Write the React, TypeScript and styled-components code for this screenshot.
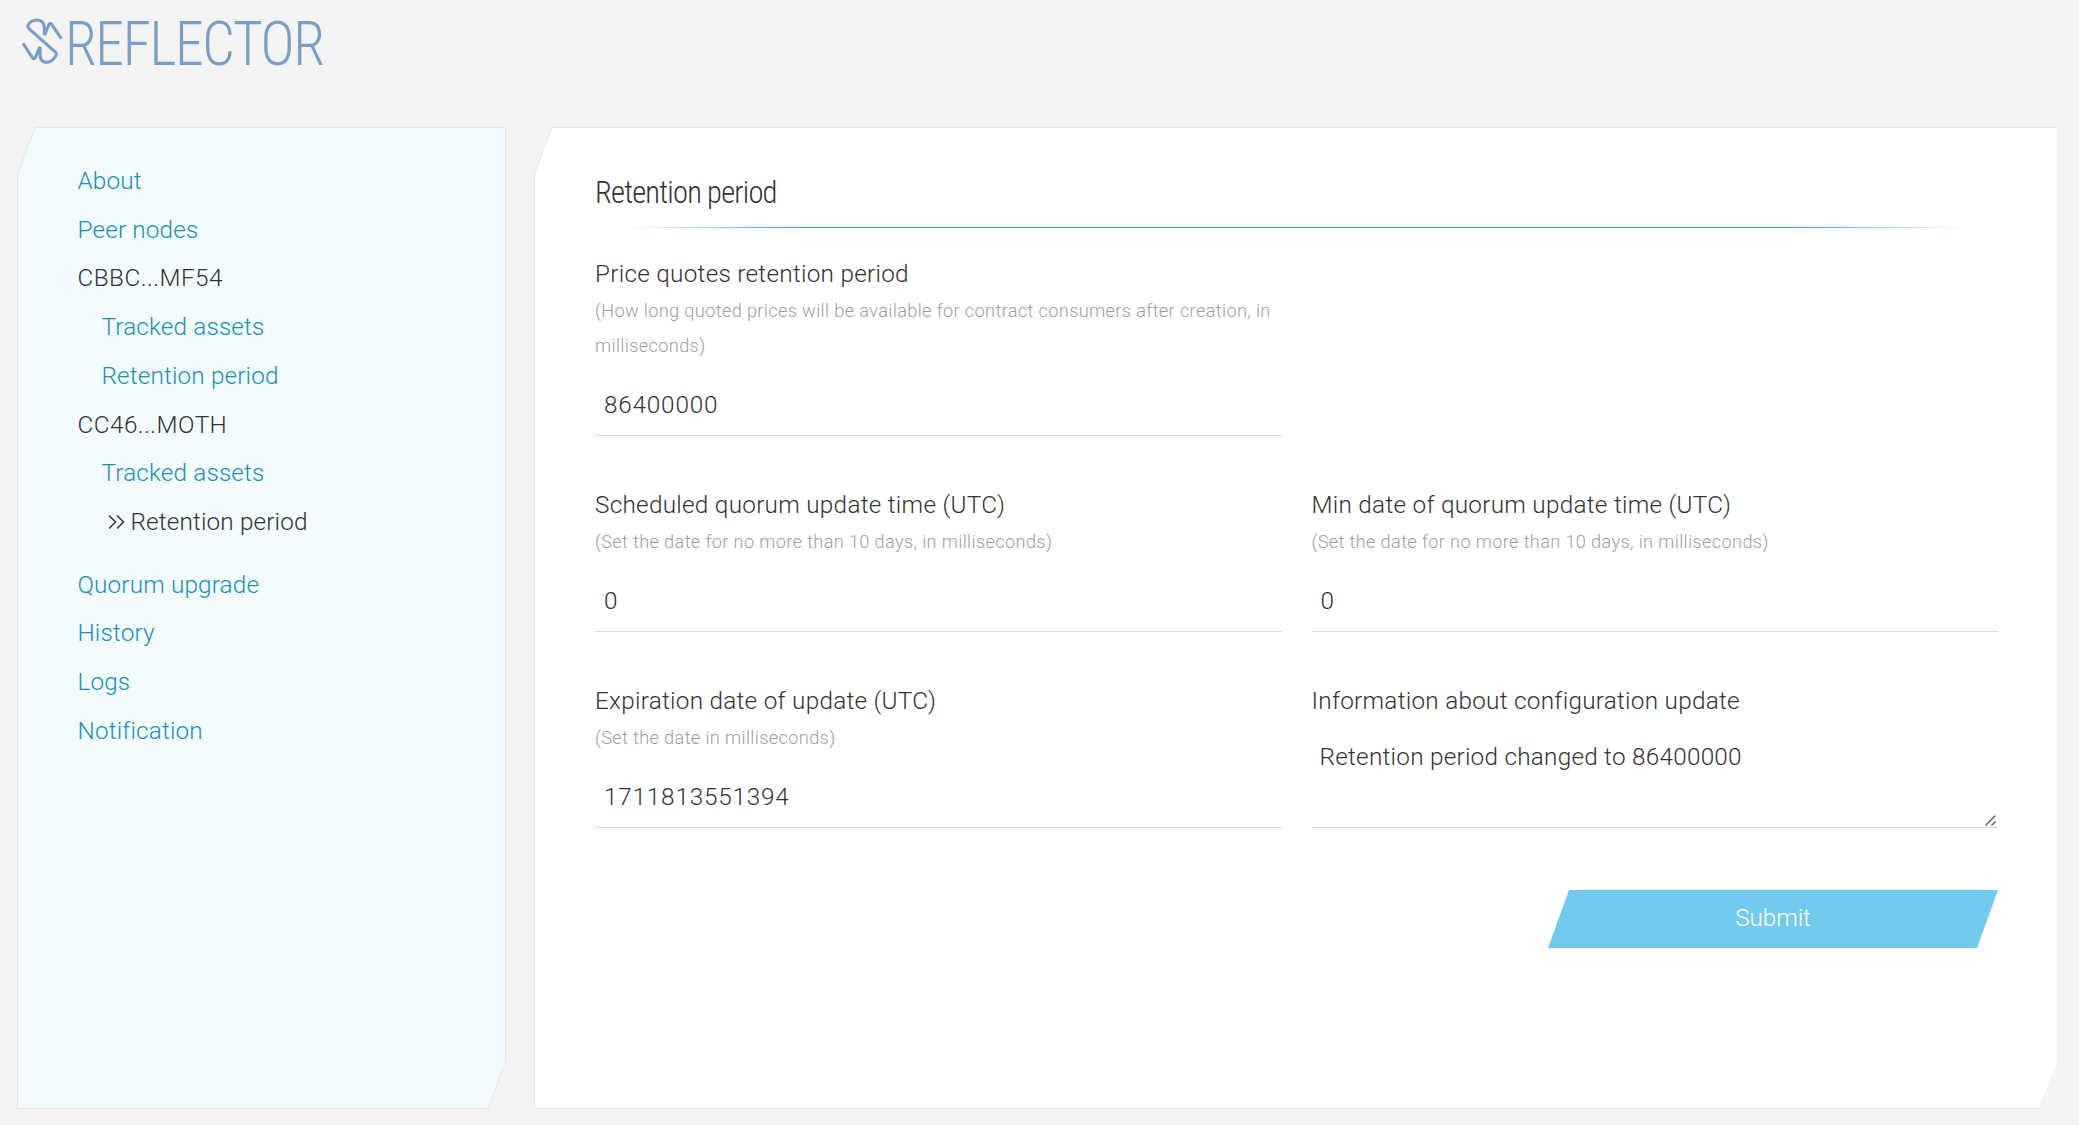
import React from 'react';
import styled, { createGlobalStyle, css } from 'styled-components';

const GlobalStyle = createGlobalStyle`
  *, *::before, *::after { box-sizing: border-box; }
  html, body { margin: 0; padding: 0; }
  body {
    background: #f4f4f4;
    color: #333;
    font-family: Roboto, "Liberation Sans", sans-serif;
    font-size: 24.3px;
    font-weight: 300;
    letter-spacing: 0.27px;
  }
`;

const Page = styled.div`
  display: flex;
  flex-direction: column;
  height: 1125px;
  padding: 0 22px 16px 17px;
  overflow: hidden;
`;

const Header = styled.header`
  display: flex;
  align-items: flex-start;
  height: 127px;
  padding: 16px 0 0 3px;
`;

const LogoMark = styled.svg`
  flex: none;
  width: 44px;
  height: 50px;
`;

const LogoText = styled.span`
  margin: -6px 0 0 1px;
  color: #779fc8;
  font-size: 60.5px;
  line-height: 70px;
  font-family: "Roboto Condensed", Roboto, sans-serif;
  font-stretch: 75%;
  letter-spacing: -1.5px;
  transform: scaleX(0.955);
  transform-origin: left;
`;

const Columns = styled.div`
  display: flex;
  flex: 1;
  gap: 28px;
  min-height: 0;
`;

const notched = (x: number, y: number) => css`
  clip-path: polygon(
    ${x}px 0, 100% 0, 100% calc(100% - ${y}px),
    calc(100% - ${x}px) 100%, 0 100%, 0 ${y}px
  );
`;

const Panel = styled.div<{ $fill: string; $rightEdge?: string }>`
  position: relative;
  background: #e6e7e7;
  ${notched(18, 47)}

  &::before {
    content: "";
    position: absolute;
    inset: 1px ${p => p.$rightEdge ?? '1px'} 1px 1px;
    background: ${p => p.$fill};
    ${notched(17.5, 46)}
  }

  > * { position: relative; }
`;

const Sidebar = styled(Panel)`
  flex: none;
  width: 489px;
  padding: 30px 60px 30px 60.5px;
  letter-spacing: 0.15px;
`;

const Main = styled(Panel)`
  flex: 1;
  padding: 43px 59px 0 61px;
`;

const NavList = styled.ul<{ $nested?: boolean }>`
  list-style: none;
  margin: 0;
  padding: 0 0 0 ${p => (p.$nested ? '24px' : '0')};
`;

const NavItem = styled.li<{ $spaced?: boolean }>`
  line-height: 48.7px;
  margin-bottom: ${p => (p.$spaced ? '14px' : '0')};
`;

const NavGroup = styled.span`
  letter-spacing: 0.45px;
`;

const NavLink = styled.a`
  color: #1b8fb8;
  text-decoration: none;
`;

const NavCurrent = styled.span`
  display: flex;
  align-items: center;
  gap: 6px;
  padding-left: 6px;
`;

const Chevrons = styled.svg`
  width: 17px;
  height: 16px;
`;

const Title = styled.h2`
  margin: 0;
  height: 58px;
  font-family: "Roboto Condensed", Roboto, sans-serif;
  font-size: 30.5px;
  font-weight: 300;
  font-stretch: 75%;
  line-height: 45px;
  letter-spacing: -0.8px;
`;

const Rule = styled.div`
  height: 1px;
  margin: -1px 0 28px;
  background: linear-gradient(90deg, transparent 2%, #1cb0d6 15%, #1cb0d6 85%, transparent 98%);
`;

const Form = styled.form`
  display: grid;
  grid-template-columns: 1fr 1fr;
  column-gap: 30px;
  row-gap: 51px;
`;

const Field = styled.div<{ $column?: number }>`
  display: flex;
  flex-direction: column;
  grid-column: ${p => p.$column ?? 'auto'};
`;

const Label = styled.label`
  padding-bottom: 1px;
  line-height: 36px;
`;

const Hint = styled.span`
  color: #9d9d9d;
  font-size: 18.2px;
  line-height: 35px;
  letter-spacing: 0.35px;
`;

const control = css`
  display: block;
  width: 100%;
  border: 0;
  border-bottom: 1px solid #d6d8d9;
  border-radius: 0;
  outline: 0;
  background: transparent;
  color: inherit;
  font: inherit;
`;

const Input = styled.input`
  ${control}
  height: 62px;
  margin: 11px 0 0;
  padding: 0 9px;
  letter-spacing: 0.8px;
`;

const TextAreaBox = styled.div`
  position: relative;
  margin-top: 10px;
`;

const TextArea = styled.textarea`
  ${control}
  height: 98px;
  margin: 0;
  padding: 8px 8px 0;
  line-height: 37px;
  letter-spacing: 0.25px;
  resize: none;
`;

const ResizeGrip = styled.svg`
  position: absolute;
  right: 2px;
  bottom: 2px;
  width: 11px;
  height: 11px;
`;

const Actions = styled.div`
  display: flex;
  justify-content: flex-end;
  margin-top: 62px;
`;

const SubmitButton = styled.button`
  width: 450px;
  height: 58px;
  padding: 0 0 4px;
  border: 0;
  background: #72cbee;
  color: #fff;
  font: inherit;
  letter-spacing: -0.1px;
  clip-path: polygon(21px 0, 100% 0, calc(100% - 21px) 100%, 0 100%);
`;

type Entry = { label: string; children?: { label: string; current?: boolean }[] };

const entries: Entry[] = [
  { label: 'About' },
  { label: 'Peer nodes' },
  { label: 'CBBC...MF54', children: [{ label: 'Tracked assets' }, { label: 'Retention period' }] },
  { label: 'CC46...MOTH', children: [{ label: 'Tracked assets' }, { label: 'Retention period', current: true }] },
  { label: 'Quorum upgrade' },
  { label: 'History' },
  { label: 'Logs' },
  { label: 'Notification' },
];

function Logo() {
  return (
    <LogoMark viewBox="60 48 132 150" fill="none" stroke="#779fc8" strokeWidth="9.5">
      <path d="M184 116 L155 73 Q151 68 147 74 L133 105 L133 85 C133 68 124 60 112 60 C97 60 88 68 84 76 Q82 81 86 85 L167 157 Q171 161 167 168 C160 180 150 187 138 187 C127 187 120 178 120 163 L120 141 L106 172 Q101 179 97 173 L69 130" />
    </LogoMark>
  );
}

function Nav() {
  return (
    <NavList>
      {entries.map(entry => (
        <NavItem key={entry.label} $spaced={entry.children?.some(c => c.current)}>
          {entry.children ? <NavGroup>{entry.label}</NavGroup> : <NavLink href="#">{entry.label}</NavLink>}
          {entry.children && (
            <NavList $nested>
              {entry.children.map(child => (
                <NavItem key={child.label}>
                  {child.current ? (
                    <NavCurrent>
                      <Chevrons viewBox="0 0 17 16" fill="none" stroke="#333" strokeWidth="1.5">
                        <path d="M1 1.5 L7.5 8 L1 14.5 M9 1.5 L15.5 8 L9 14.5" />
                      </Chevrons>
                      {child.label}
                    </NavCurrent>
                  ) : (
                    <NavLink href="#">{child.label}</NavLink>
                  )}
                </NavItem>
              ))}
            </NavList>
          )}
        </NavItem>
      ))}
    </NavList>
  );
}

export default function App() {
  return (
    <>
      <GlobalStyle />
      <Page>
        <Header>
          <Logo />
          <LogoText>REFLECTOR</LogoText>
        </Header>
        <Columns>
          <Sidebar as="aside" $fill="#f2fbfe">
            <Nav />
          </Sidebar>
          <Main as="main" $fill="#fff" $rightEdge="0">
            <Title>Retention period</Title>
            <Rule />
            <Form>
              <Field $column={1}>
                <Label>Price quotes retention period</Label>
                <Hint>(How long quoted prices will be available for contract consumers after creation, in milliseconds)</Hint>
                <Input defaultValue="86400000" />
              </Field>
              <Field $column={1}>
                <Label>Scheduled quorum update time (UTC)</Label>
                <Hint>(Set the date for no more than 10 days, in milliseconds)</Hint>
                <Input defaultValue="0" />
              </Field>
              <Field>
                <Label>Min date of quorum update time (UTC)</Label>
                <Hint>(Set the date for no more than 10 days, in milliseconds)</Hint>
                <Input defaultValue="0" />
              </Field>
              <Field>
                <Label>Expiration date of update (UTC)</Label>
                <Hint>(Set the date in milliseconds)</Hint>
                <Input defaultValue="1711813551394" />
              </Field>
              <Field>
                <Label>Information about configuration update</Label>
                <TextAreaBox>
                  <TextArea defaultValue="Retention period changed to 86400000" spellCheck={false} />
                  <ResizeGrip viewBox="0 0 11 11" fill="none" stroke="#555" strokeWidth="1.3">
                    <path d="M0.5 10.5 L10.5 0.5 M6.5 10.5 L10.5 6.5" />
                  </ResizeGrip>
                </TextAreaBox>
              </Field>
            </Form>
            <Actions>
              <SubmitButton type="button">Submit</SubmitButton>
            </Actions>
          </Main>
        </Columns>
      </Page>
    </>
  );
}
